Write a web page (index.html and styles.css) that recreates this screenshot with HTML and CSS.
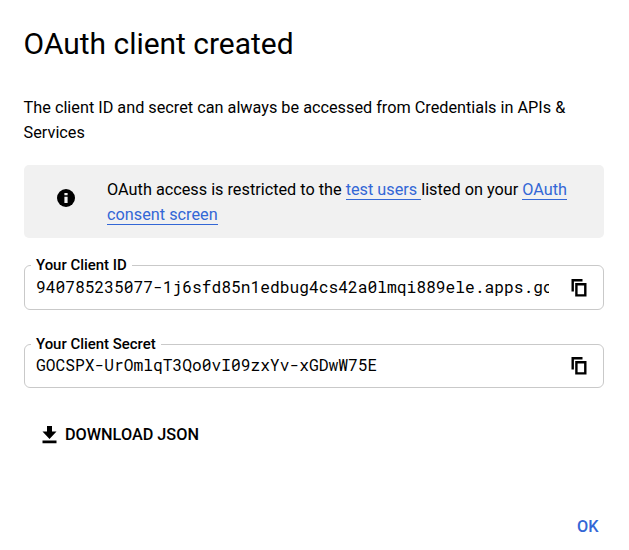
FILE: index.html
```html
<!DOCTYPE html>
<html lang="en">
<head>
<meta charset="utf-8">
<title>OAuth client created</title>
<link rel="stylesheet" href="styles.css">
</head>
<body>
<main class="dialog">
  <h1 class="title">OAuth client created</h1>
  <p class="intro">The client ID and secret can always be accessed from Credentials in APIs &amp; Services</p>
  <section class="notice">
    <svg class="info-icon" viewBox="0 0 18 18"><circle cx="9" cy="9" r="9"/><path class="cut" d="M7.4 4h3.2v2.3H7.4zM7.4 7.7h3.2v6.3H7.4z"/></svg>
    <p class="notice-text">OAuth access is restricted to the <a class="link">test users&nbsp;</a>listed on your <a class="link">OAuth consent screen</a></p>
  </section>
  <fieldset class="field field-id">
    <legend class="label">Your Client ID</legend>
    <div class="row">
      <span class="value">940785235077-1j6sfd85n1edbug4cs42a0lmqi889ele.apps.googleusercontent.com</span>
      <svg class="copy-icon" viewBox="0 0 16 18"><path d="M1.7 12.5V1.2h9.8M5.4 5.2h8.9v11.2H5.4z"/></svg>
    </div>
  </fieldset>
  <fieldset class="field field-secret">
    <legend class="label">Your Client Secret</legend>
    <div class="row">
      <span class="value">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</span>
      <svg class="copy-icon" viewBox="0 0 16 18"><path d="M1.7 12.5V1.2h9.8M5.4 5.2h8.9v11.2H5.4z"/></svg>
    </div>
  </fieldset>
  <button class="download">
    <svg class="download-icon" viewBox="0 0 15 18"><path d="M5 0h5v5.5h4.5L7.5 13 .5 5.5H5zM.5 14.6h14v2.6H.5z"/></svg>
    <span>DOWNLOAD JSON</span>
  </button>
  <footer class="actions"><button class="ok">OK</button></footer>
</main>
</body>
</html>
```
FILE: styles.css
```css
* { box-sizing: border-box; }
body {
  margin: 0;
  background: #fff;
  color: #000;
  font: 16.25px/25px Roboto, sans-serif;
}
.dialog {
  display: flex;
  flex-direction: column;
  width: 629px;
  height: 550px;
  padding: 24px 25px 0 23.6px;
  overflow: hidden;
}
.title { margin: 0; font-size: 29.95px; font-weight: 400; line-height: 40px; }
.intro { margin: 31px 0 20px; }
.notice {
  display: flex;
  height: 73px;
  padding: 12px 20px 0 33px;
  border-radius: 5px;
  background: #f1f1f1;
}
.info-icon { flex: none; width: 18px; height: 18px; margin: 12px 32.5px 0 0; }
.cut { fill: #f1f1f1; }
.notice-text { margin: 0; }
.link { color: #3367d6; border-bottom: 1px solid #3367d6; }
.field {
  min-width: 0;
  margin: 0;
  padding: 0 16px 0 6px;
  border: 1px solid #c9c9c9;
  border-radius: 6px;
}
.field-id { height: 53px; margin-top: 19px; }
.field-secret { height: 52px; margin-top: 26px; }
.label { padding: 1px 5px 0 5.4px; font-size: 14.95px; font-weight: 500; line-height: 15px; }
.row { display: flex; align-items: center; height: 28px; }
.value {
  width: 513px;
  margin-left: 5.4px;
  overflow: hidden;
  white-space: nowrap;
  font: 16.25px/24px "Roboto Mono", "DejaVu Sans Mono", monospace;
}
.field-secret .value { margin-top: -2px; }
.copy-icon {
  width: 16px;
  height: 18px;
  margin-left: auto;
  fill: none;
  stroke: #000;
  stroke-width: 2.4;
}
.field-id .copy-icon { margin-top: 1px; }
button {
  padding: 0;
  border: 0;
  background: none;
  font: 500 16.25px/24px Roboto, sans-serif;
}
.download { display: flex; align-items: center; align-self: flex-start; gap: 8px; margin: 35px 0 0 18.4px; color: #000; }
.download-icon { width: 15px; height: 18px; margin-top: -1px; }
.actions { display: flex; justify-content: flex-end; margin-top: 68px; padding-right: 5.5px; }
.ok { color: #3367d6; }
```
